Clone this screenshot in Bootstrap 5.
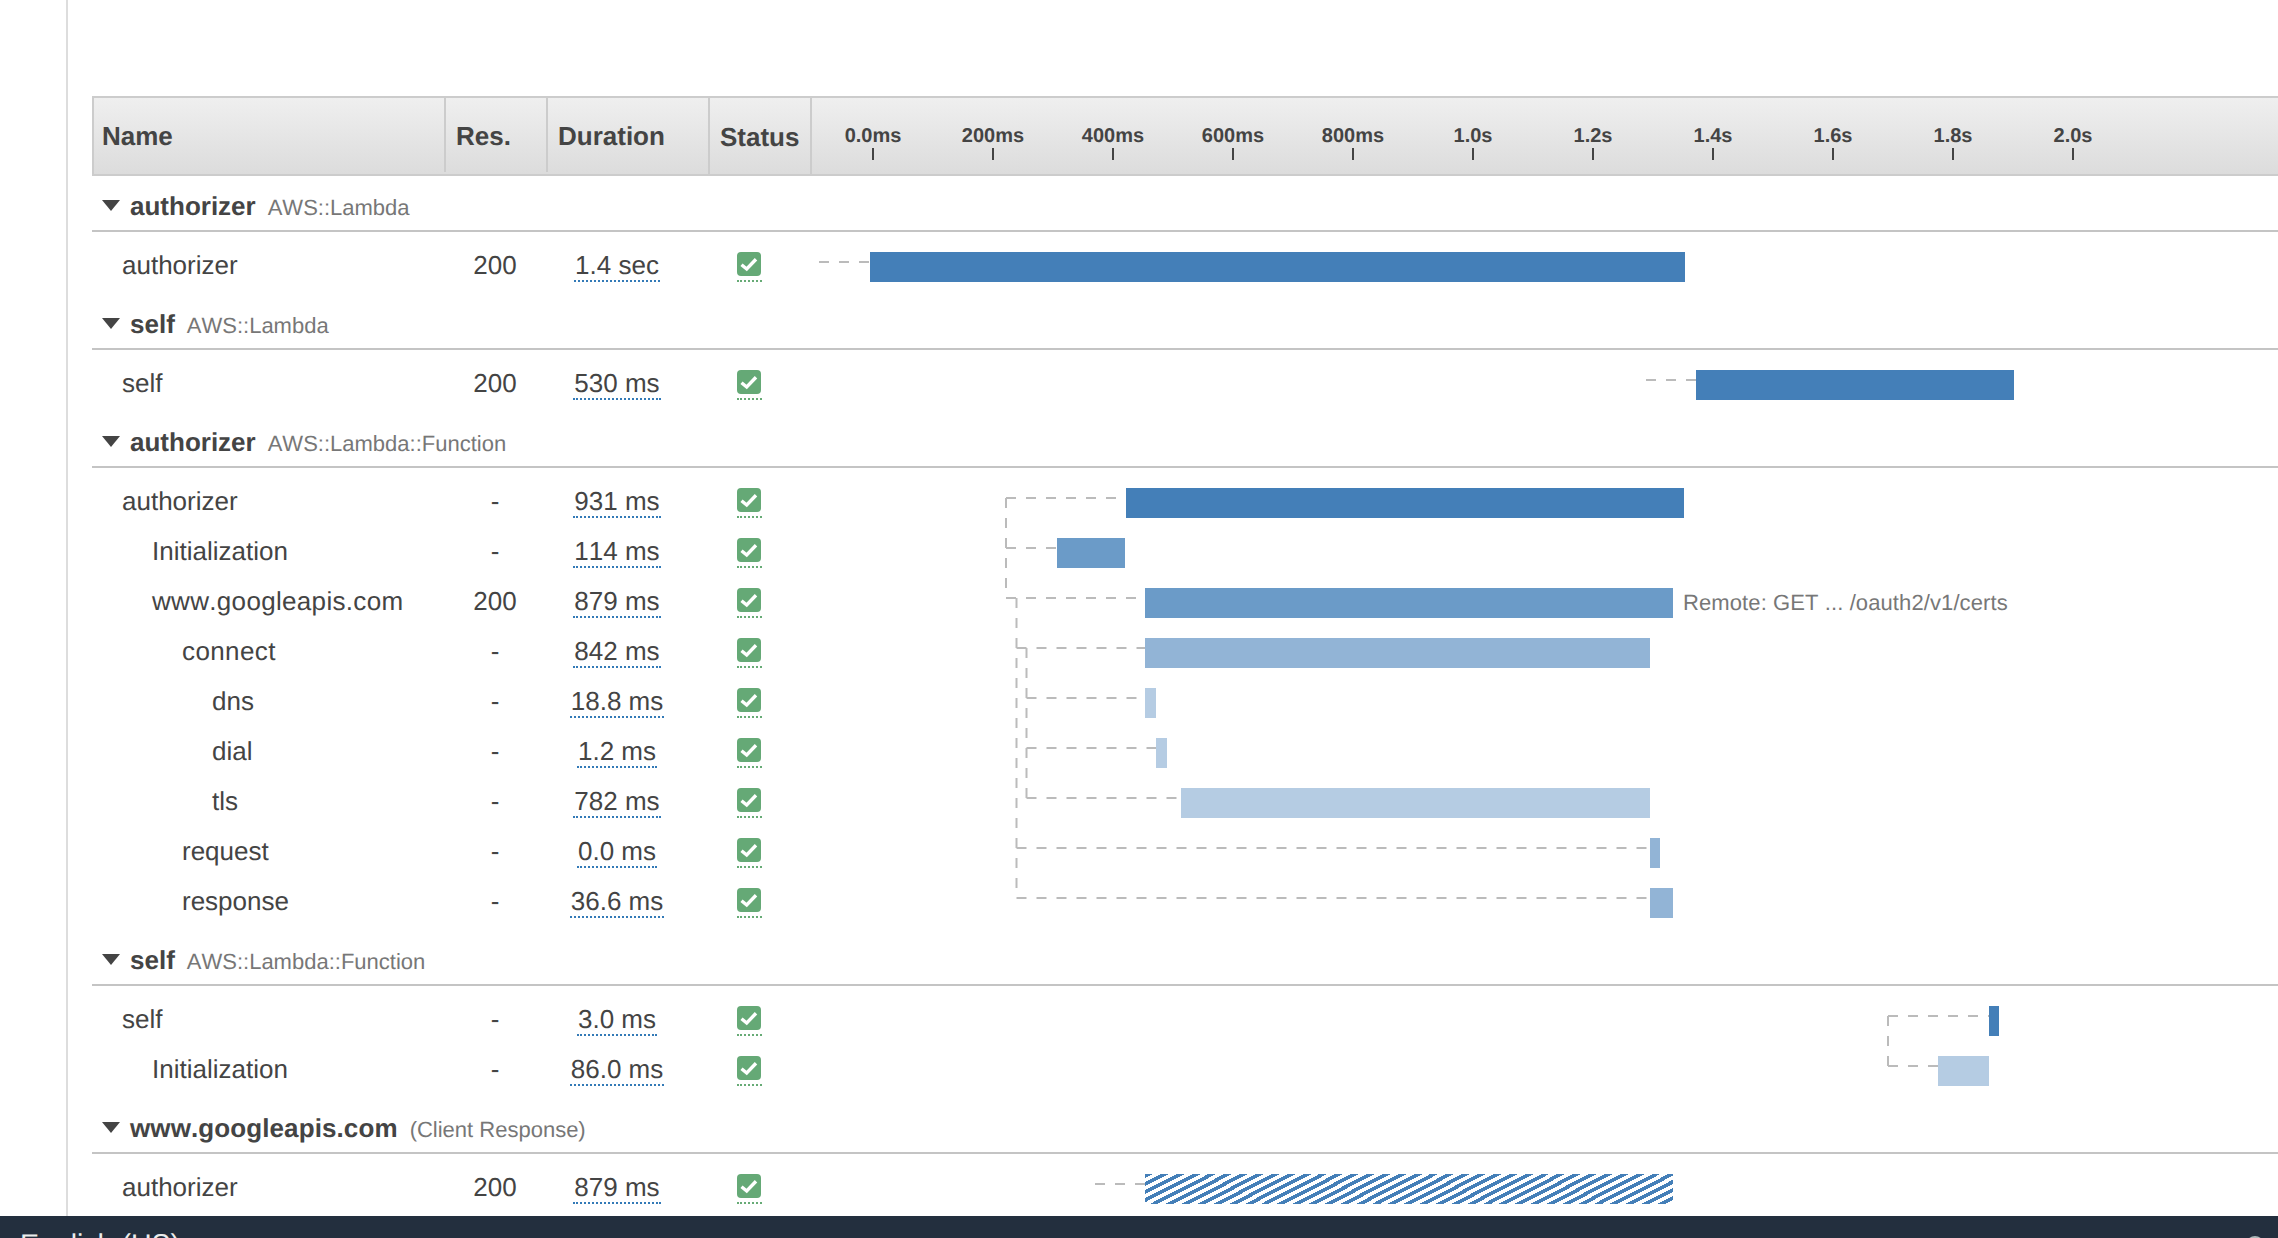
<!doctype html>
<html lang="en">
<head>
<meta charset="utf-8">
<title>Trace timeline</title>
<link href="https://cdn.jsdelivr.net/npm/bootstrap@5.3.0/dist/css/bootstrap.min.css" rel="stylesheet">
<style>
html,body{height:100%;overflow:hidden}
body{font-family:"Liberation Sans",Arial,sans-serif;font-size:26px;color:#444;background:#fff;text-rendering:geometricPrecision;font-kerning:none}
.tl-shell{height:1216px;overflow:hidden}
.tl-rail{width:68px;flex:none;border-right:2px solid #ddd}
.tl-main{margin-left:24px;padding-top:96px;min-width:0}
.tl-head{height:80px;border:solid #ccc;border-width:2px 0 2px 2px;background:linear-gradient(#efefef,#dcdcdc)}
.hc{font-weight:700;padding:2px 0 0 10px;line-height:30px;margin-bottom:2px;border-left:2px solid #ccc;flex:none}
.hc-name{width:350px;padding-left:8px;border-left:0}
.hc-res{width:102px}
.hc-dur{width:162px}
.hc-sta{width:102px;margin-bottom:0}
.hc-time{border-left:2px solid #ccc;padding-left:1px}
.tk{width:120px;flex:none;font-size:20px;font-weight:700;line-height:24px;padding-top:26px}
.tk-mark{width:2px;height:12px;margin:0 auto;background:#444}
.grp{border-bottom:2px solid #c4c4c4;height:60px;padding:0 0 7px 10px;line-height:30px}
.grp-first{height:56px}
.grp-tri{width:18px;height:11px;margin:0 10px 12px 0;flex:none;fill:#444}
.grp-sub{font-size:22px;color:#777;margin-left:12px;font-weight:400}
.grp-rows{padding-top:8px}
.tl-row{height:50px;line-height:30px;padding-top:10px}
.c-name{width:352px;flex:none;padding-left:30px}
.d1{padding-left:60px}
.d2{padding-left:90px}
.d3{padding-left:120px}
.sp-a{letter-spacing:.32px}
.sp-b{letter-spacing:.1px}
.sp-c{letter-spacing:.4px}
.c-res{width:102px;flex:none}
.c-dur{width:162px;flex:none;padding-right:20px}
.c-sta{width:103px;flex:none;padding-left:29px}
.dur-val{display:inline-block;padding:0 1px;height:32px;border-bottom:2px dotted #337ab7}
.sta-val{display:block;width:25px;height:32px;padding-top:2px;border-bottom:2px dotted #67ab76}
.sta-val svg{display:block}
.c-time{min-width:0}
.wf-bar{position:absolute;top:2px;height:30px}
.b0{background:#447fb8}
.b1{background:#6b9bc8}
.b2{background:#92b4d6}
.b3{background:#b5cce3}
.bx{background:repeating-linear-gradient(153deg,#447fb8 0 3.6px,#fff 3.6px 7.2px)}
.wf-note{position:absolute;top:2px;font-size:22px;color:#777;white-space:nowrap}
.wf-links{position:absolute;left:0;top:0;pointer-events:none}
.wf-links path{fill:none;stroke:#bbb;stroke-width:2;stroke-dasharray:10 10}
.tl-foot{height:22px;overflow:hidden;background:#232f3e;color:#eaeded;font-size:28.5px;line-height:28px;padding:15px 14px 0 20px}
.foot-ico{width:18px;height:18px;border-radius:50%;background:#aab7b8;margin-top:5px}
</style>
</head>
<body>
<div class="tl-shell d-flex position-relative">
  <div class="tl-rail"></div>
  <div class="tl-main flex-grow-1">
    <div class="tl-head d-flex">
      <div class="hc hc-name d-flex align-items-center">Name</div>
      <div class="hc hc-res d-flex align-items-center">Res.</div>
      <div class="hc hc-dur d-flex align-items-center">Duration</div>
      <div class="hc hc-sta d-flex align-items-center">Status</div>
      <div class="hc-time d-flex flex-grow-1">
        <div class="tk text-center">0.0ms<div class="tk-mark"></div></div>
        <div class="tk text-center">200ms<div class="tk-mark"></div></div>
        <div class="tk text-center">400ms<div class="tk-mark"></div></div>
        <div class="tk text-center">600ms<div class="tk-mark"></div></div>
        <div class="tk text-center">800ms<div class="tk-mark"></div></div>
        <div class="tk text-center">1.0s<div class="tk-mark"></div></div>
        <div class="tk text-center">1.2s<div class="tk-mark"></div></div>
        <div class="tk text-center">1.4s<div class="tk-mark"></div></div>
        <div class="tk text-center">1.6s<div class="tk-mark"></div></div>
        <div class="tk text-center">1.8s<div class="tk-mark"></div></div>
        <div class="tk text-center">2.0s<div class="tk-mark"></div></div>
      </div>
    </div>

    <div class="grp grp-first d-flex align-items-end">
      <svg class="grp-tri" viewBox="0 0 18 11"><polygon points="0,0 18,0 9,11"/></svg>
      <div><span class="fw-bold">authorizer</span><span class="grp-sub">AWS::Lambda</span></div>
    </div>
    <div class="grp-rows">
      <div class="tl-row d-flex">
        <div class="c-name">authorizer</div><div class="c-res text-center">200</div>
        <div class="c-dur text-center"><span class="dur-val">1.4 sec</span></div>
        <div class="c-sta"><span class="sta-val"><svg width="24" height="24" viewBox="0 0 24 24"><rect width="24" height="24" rx="4" fill="#65a976"/><path d="M4.5 12.7 9.7 17 19 7.3" fill="none" stroke="#fff" stroke-width="3.4"/></svg></span></div>
        <div class="c-time flex-grow-1 position-relative"><div class="wf-bar b0" style="left:59px;width:815px"></div></div>
      </div>
    </div>

    <div class="grp d-flex align-items-end">
      <svg class="grp-tri" viewBox="0 0 18 11"><polygon points="0,0 18,0 9,11"/></svg>
      <div><span class="fw-bold">self</span><span class="grp-sub">AWS::Lambda</span></div>
    </div>
    <div class="grp-rows">
      <div class="tl-row d-flex">
        <div class="c-name">self</div><div class="c-res text-center">200</div>
        <div class="c-dur text-center"><span class="dur-val">530 ms</span></div>
        <div class="c-sta"><span class="sta-val"><svg width="24" height="24" viewBox="0 0 24 24"><rect width="24" height="24" rx="4" fill="#65a976"/><path d="M4.5 12.7 9.7 17 19 7.3" fill="none" stroke="#fff" stroke-width="3.4"/></svg></span></div>
        <div class="c-time flex-grow-1 position-relative"><div class="wf-bar b0" style="left:885px;width:318px"></div></div>
      </div>
    </div>

    <div class="grp d-flex align-items-end">
      <svg class="grp-tri" viewBox="0 0 18 11"><polygon points="0,0 18,0 9,11"/></svg>
      <div><span class="fw-bold">authorizer</span><span class="grp-sub">AWS::Lambda::Function</span></div>
    </div>
    <div class="grp-rows">
      <div class="tl-row d-flex">
        <div class="c-name">authorizer</div><div class="c-res text-center">-</div>
        <div class="c-dur text-center"><span class="dur-val">931 ms</span></div>
        <div class="c-sta"><span class="sta-val"><svg width="24" height="24" viewBox="0 0 24 24"><rect width="24" height="24" rx="4" fill="#65a976"/><path d="M4.5 12.7 9.7 17 19 7.3" fill="none" stroke="#fff" stroke-width="3.4"/></svg></span></div>
        <div class="c-time flex-grow-1 position-relative"><div class="wf-bar b0" style="left:315px;width:558px"></div></div>
      </div>
      <div class="tl-row d-flex">
        <div class="c-name d1">Initialization</div><div class="c-res text-center">-</div>
        <div class="c-dur text-center"><span class="dur-val">114 ms</span></div>
        <div class="c-sta"><span class="sta-val"><svg width="24" height="24" viewBox="0 0 24 24"><rect width="24" height="24" rx="4" fill="#65a976"/><path d="M4.5 12.7 9.7 17 19 7.3" fill="none" stroke="#fff" stroke-width="3.4"/></svg></span></div>
        <div class="c-time flex-grow-1 position-relative"><div class="wf-bar b1" style="left:246px;width:68px"></div></div>
      </div>
      <div class="tl-row d-flex">
        <div class="c-name d1 sp-a">www.googleapis.com</div><div class="c-res text-center">200</div>
        <div class="c-dur text-center"><span class="dur-val">879 ms</span></div>
        <div class="c-sta"><span class="sta-val"><svg width="24" height="24" viewBox="0 0 24 24"><rect width="24" height="24" rx="4" fill="#65a976"/><path d="M4.5 12.7 9.7 17 19 7.3" fill="none" stroke="#fff" stroke-width="3.4"/></svg></span></div>
        <div class="c-time flex-grow-1 position-relative"><div class="wf-bar b1" style="left:334px;width:528px"></div><span class="wf-note sp-b" style="left:872px">Remote: GET ... /oauth2/v1/certs</span></div>
      </div>
      <div class="tl-row d-flex">
        <div class="c-name d2 sp-c">connect</div><div class="c-res text-center">-</div>
        <div class="c-dur text-center"><span class="dur-val">842 ms</span></div>
        <div class="c-sta"><span class="sta-val"><svg width="24" height="24" viewBox="0 0 24 24"><rect width="24" height="24" rx="4" fill="#65a976"/><path d="M4.5 12.7 9.7 17 19 7.3" fill="none" stroke="#fff" stroke-width="3.4"/></svg></span></div>
        <div class="c-time flex-grow-1 position-relative"><div class="wf-bar b2" style="left:334px;width:505px"></div></div>
      </div>
      <div class="tl-row d-flex">
        <div class="c-name d3">dns</div><div class="c-res text-center">-</div>
        <div class="c-dur text-center"><span class="dur-val">18.8 ms</span></div>
        <div class="c-sta"><span class="sta-val"><svg width="24" height="24" viewBox="0 0 24 24"><rect width="24" height="24" rx="4" fill="#65a976"/><path d="M4.5 12.7 9.7 17 19 7.3" fill="none" stroke="#fff" stroke-width="3.4"/></svg></span></div>
        <div class="c-time flex-grow-1 position-relative"><div class="wf-bar b3" style="left:334px;width:11px"></div></div>
      </div>
      <div class="tl-row d-flex">
        <div class="c-name d3">dial</div><div class="c-res text-center">-</div>
        <div class="c-dur text-center"><span class="dur-val">1.2 ms</span></div>
        <div class="c-sta"><span class="sta-val"><svg width="24" height="24" viewBox="0 0 24 24"><rect width="24" height="24" rx="4" fill="#65a976"/><path d="M4.5 12.7 9.7 17 19 7.3" fill="none" stroke="#fff" stroke-width="3.4"/></svg></span></div>
        <div class="c-time flex-grow-1 position-relative"><div class="wf-bar b3" style="left:345px;width:11px"></div></div>
      </div>
      <div class="tl-row d-flex">
        <div class="c-name d3">tls</div><div class="c-res text-center">-</div>
        <div class="c-dur text-center"><span class="dur-val">782 ms</span></div>
        <div class="c-sta"><span class="sta-val"><svg width="24" height="24" viewBox="0 0 24 24"><rect width="24" height="24" rx="4" fill="#65a976"/><path d="M4.5 12.7 9.7 17 19 7.3" fill="none" stroke="#fff" stroke-width="3.4"/></svg></span></div>
        <div class="c-time flex-grow-1 position-relative"><div class="wf-bar b3" style="left:370px;width:469px"></div></div>
      </div>
      <div class="tl-row d-flex">
        <div class="c-name d2">request</div><div class="c-res text-center">-</div>
        <div class="c-dur text-center"><span class="dur-val">0.0 ms</span></div>
        <div class="c-sta"><span class="sta-val"><svg width="24" height="24" viewBox="0 0 24 24"><rect width="24" height="24" rx="4" fill="#65a976"/><path d="M4.5 12.7 9.7 17 19 7.3" fill="none" stroke="#fff" stroke-width="3.4"/></svg></span></div>
        <div class="c-time flex-grow-1 position-relative"><div class="wf-bar b2" style="left:839px;width:10px"></div></div>
      </div>
      <div class="tl-row d-flex">
        <div class="c-name d2">response</div><div class="c-res text-center">-</div>
        <div class="c-dur text-center"><span class="dur-val">36.6 ms</span></div>
        <div class="c-sta"><span class="sta-val"><svg width="24" height="24" viewBox="0 0 24 24"><rect width="24" height="24" rx="4" fill="#65a976"/><path d="M4.5 12.7 9.7 17 19 7.3" fill="none" stroke="#fff" stroke-width="3.4"/></svg></span></div>
        <div class="c-time flex-grow-1 position-relative"><div class="wf-bar b2" style="left:839px;width:23px"></div></div>
      </div>
    </div>

    <div class="grp d-flex align-items-end">
      <svg class="grp-tri" viewBox="0 0 18 11"><polygon points="0,0 18,0 9,11"/></svg>
      <div><span class="fw-bold">self</span><span class="grp-sub">AWS::Lambda::Function</span></div>
    </div>
    <div class="grp-rows">
      <div class="tl-row d-flex">
        <div class="c-name">self</div><div class="c-res text-center">-</div>
        <div class="c-dur text-center"><span class="dur-val">3.0 ms</span></div>
        <div class="c-sta"><span class="sta-val"><svg width="24" height="24" viewBox="0 0 24 24"><rect width="24" height="24" rx="4" fill="#65a976"/><path d="M4.5 12.7 9.7 17 19 7.3" fill="none" stroke="#fff" stroke-width="3.4"/></svg></span></div>
        <div class="c-time flex-grow-1 position-relative"><div class="wf-bar b0" style="left:1178px;width:10px"></div></div>
      </div>
      <div class="tl-row d-flex">
        <div class="c-name d1">Initialization</div><div class="c-res text-center">-</div>
        <div class="c-dur text-center"><span class="dur-val">86.0 ms</span></div>
        <div class="c-sta"><span class="sta-val"><svg width="24" height="24" viewBox="0 0 24 24"><rect width="24" height="24" rx="4" fill="#65a976"/><path d="M4.5 12.7 9.7 17 19 7.3" fill="none" stroke="#fff" stroke-width="3.4"/></svg></span></div>
        <div class="c-time flex-grow-1 position-relative"><div class="wf-bar b3" style="left:1127px;width:51px"></div></div>
      </div>
    </div>

    <div class="grp d-flex align-items-end">
      <svg class="grp-tri" viewBox="0 0 18 11"><polygon points="0,0 18,0 9,11"/></svg>
      <div><span class="fw-bold sp-b">www.googleapis.com</span><span class="grp-sub">(Client Response)</span></div>
    </div>
    <div class="grp-rows">
      <div class="tl-row d-flex">
        <div class="c-name">authorizer</div><div class="c-res text-center">200</div>
        <div class="c-dur text-center"><span class="dur-val">879 ms</span></div>
        <div class="c-sta"><span class="sta-val"><svg width="24" height="24" viewBox="0 0 24 24"><rect width="24" height="24" rx="4" fill="#65a976"/><path d="M4.5 12.7 9.7 17 19 7.3" fill="none" stroke="#fff" stroke-width="3.4"/></svg></span></div>
        <div class="c-time flex-grow-1 position-relative"><div class="wf-bar bx" style="left:334px;width:528px"></div></div>
      </div>
    </div>
  </div>

  <svg class="wf-links" width="2278" height="1216" viewBox="0 0 2278 1216" aria-hidden="true">
    <path d="M819 262H870"/>
    <path d="M1646 380H1696"/>
    <path d="M1006 498H1126"/>
    <path d="M1006 498V598"/>
    <path d="M1006 548H1057"/>
    <path d="M1006 598H1145"/>
    <path d="M1016.5 598V898"/>
    <path d="M1016.5 648H1145"/>
    <path d="M1016.5 848H1650"/>
    <path d="M1016.5 898H1650"/>
    <path d="M1026.5 648V798"/>
    <path d="M1026.5 698H1145"/>
    <path d="M1026.5 748H1156"/>
    <path d="M1026.5 798H1181"/>
    <path d="M1888 1016H1989"/>
    <path d="M1888 1016V1066"/>
    <path d="M1888 1066H1938"/>
    <path d="M1095 1184H1145"/>
  </svg>
</div>
<div class="tl-foot d-flex justify-content-between align-items-start">
  <span>English (US)</span>
  <span class="foot-ico"></span>
</div>
<script src="https://cdn.jsdelivr.net/npm/bootstrap@5.3.0/dist/js/bootstrap.bundle.min.js"></script>
</body>
</html>
